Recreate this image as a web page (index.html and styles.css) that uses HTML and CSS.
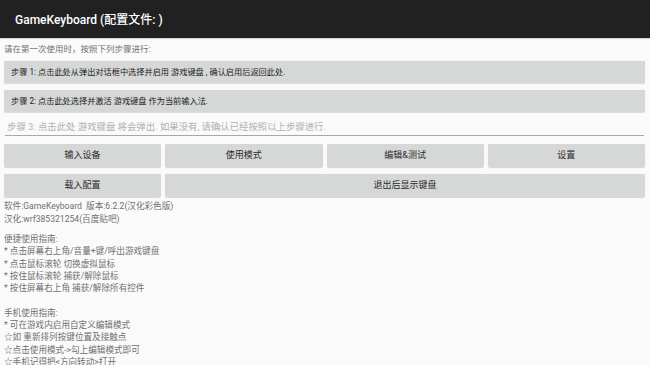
FILE: index.html
```html
<!DOCTYPE html>
<html lang="zh-CN">
<head>
<meta charset="utf-8">
<title>GameKeyboard</title>
<link rel="stylesheet" href="styles.css">
</head>
<body>
<header class="appbar">GameKeyboard (配置文件: )</header>
<main class="content">
  <p class="intro">请在第一次使用时，按照下列步骤进行:</p>
  <div class="step step-first">步骤 1: 点击此处从弹出对话框中选择并启用 游戏键盘 , 确认启用后返回此处.</div>
  <div class="step step-second">步骤 2: 点击此处选择并激活 游戏键盘 作为当前输入法.</div>
  <div class="field">步骤 3: 点击此处 游戏键盘 将会弹出. 如果没有, 请确认已经按照以上步骤进行.</div>
  <div class="buttons">
    <div class="btn">输入设备</div>
    <div class="btn">使用模式</div>
    <div class="btn">编辑&amp;测试</div>
    <div class="btn">设置</div>
    <div class="btn">载入配置</div>
    <div class="btn btn-wide">退出后显示键盘</div>
  </div>
  <div class="info">
    <div>软件:GameKeyboard&nbsp; 版本:6.2.2(汉化彩色版)</div>
    <div>汉化:wrf385321254(百度贴吧)</div>
  </div>
  <div class="guide">
    <div>便捷使用指南:</div>
    <div>* 点击屏幕右上角/音量+键/呼出游戏键盘</div>
    <div>* 点击鼠标滚轮 切换虚拟鼠标</div>
    <div>* 按住鼠标滚轮 捕获/解除鼠标</div>
    <div>* 按住屏幕右上角 捕获/解除所有控件</div>
    <div class="blank">&nbsp;</div>
    <div>手机使用指南:</div>
    <div>* 可在游戏内启用自定义编辑模式</div>
    <div>☆如 重新排列按键位置及接触点</div>
    <div>☆点击使用模式-&gt;勾上编辑模式即可</div>
    <div>☆手机记得把&lt;方向转动&gt;打开</div>
  </div>
</main>
</body>
</html>
```
FILE: styles.css
```css
html, body {
  margin: 0;
  padding: 0;
  background: #fafafa;
  overflow: hidden;
  height: 365px;
}
body {
  font-family: Roboto, "Noto Sans CJK SC", sans-serif;
  color: #707070;
}
.appbar {
  height: 38px;
  line-height: 40px;
  background: #212121;
  color: #fff;
  font-size: 12px;
  font-weight: 500;
  padding-left: 15px;
  box-shadow: 0 1px 1px rgba(0,0,0,0.15);
}
.content {
  padding: 5px 5px 0 4px;
}
.intro {
  margin: 0;
  font-size: 8.5px;
  line-height: 12.6px;
  color: #707070;
}
.step {
  background: #d6d7d7;
  color: #222;
  font-size: 8.2px;
  height: 22.5px;
  line-height: 22.5px;
  padding-left: 7px;
  border-radius: 1px;
  box-shadow: 0 0.5px 1px rgba(0,0,0,0.12);
}
.step-first { margin-top: 5px; }
.step-second { margin-top: 7px; height: 22px; line-height: 22px; }
.field {
  margin: 5px 1px 0 1px;
  padding: 2px 0 0 2px;
  height: 16px;
  line-height: 16px;
  font-size: 9.4px;
  color: #b0b0b0;
  border-bottom: 1.5px solid #a8a8a8;
}
.buttons {
  margin-top: 7.5px;
  display: grid;
  grid-template-columns: repeat(4, 1fr);
  grid-auto-rows: 23px;
  column-gap: 4px;
  row-gap: 7px;
}
.btn {
  background: #d6d7d7;
  border-radius: 2px;
  box-shadow: 0 0.5px 1px rgba(0,0,0,0.15);
  color: #2a2a2a;
  font-size: 9px;
  line-height: 23px;
  text-align: center;
}
.btn-wide {
  grid-column: span 3;
}
.info {
  margin-top: 3.5px;
  font-size: 8.6px;
  line-height: 13px;
}
.guide {
  margin-top: 7px;
  font-size: 8.6px;
  line-height: 12.3px;
}
.blank {
  height: 12.3px;
}
```
